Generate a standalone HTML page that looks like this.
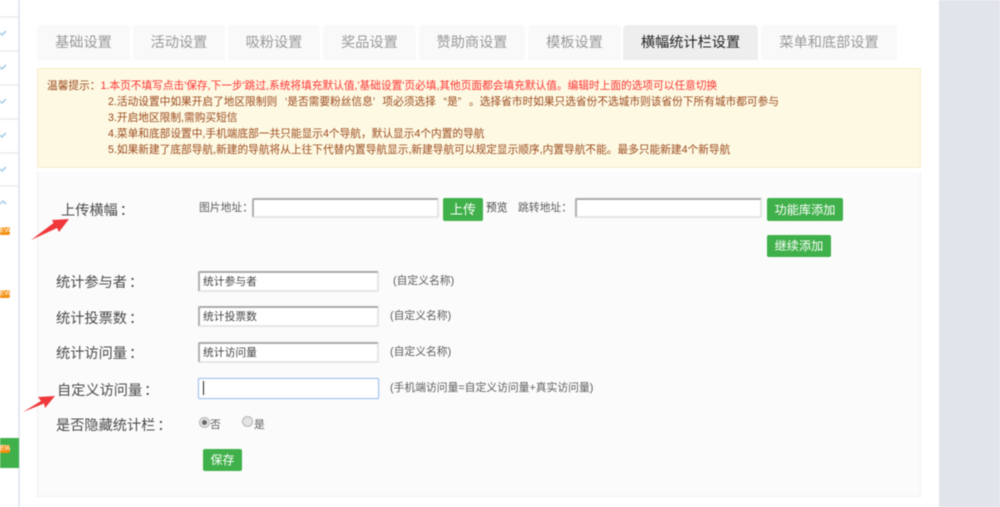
<!DOCTYPE html>
<html lang="zh">
<head>
<meta charset="utf-8">
<style>
html,body{margin:0;padding:0;background:#fff}
#p{position:relative;width:1000px;height:507px;overflow:hidden;background:#fff;font-family:"Liberation Sans","Noto Sans CJK SC",sans-serif;filter:blur(.45px)}
#p div{position:absolute;white-space:nowrap;box-sizing:border-box}
.tab{top:25px;height:35px;background:#f9f9f9;border-radius:4px 4px 0 0;color:#999;font-size:14.2px;line-height:36px;text-align:center}
.n{left:0;width:18px;height:2px;background:#f0f0f0}
.b{left:0;width:10px;height:8px;background:#f39012;border-radius:0 2px 2px 0;color:#fff;font-size:7px;line-height:8px;text-align:right;overflow:hidden}
.l{color:#4a4a4a;font-size:14.2px;line-height:20px}
.l .c{margin-left:2px}
.s{color:#5c5c5c;font-size:10.8px;line-height:14px}
.i{background:#fff;border:1px solid #e6e6e6;border-bottom:2px solid #e6e6e6;border-right:2px solid #e6e6e6;border-top:2px solid #aaa;border-left:2px solid #b0b0b0;border-radius:2px;font-size:10.8px;line-height:18px;color:#444;padding-left:3px}
.g{background:#40b04a;border-radius:2px;color:#fff;text-align:center}
.t{left:47px;font-size:10.7px;line-height:16px;color:#9c4a1e}
.c{font-family:"Liberation Sans","Noto Sans CJK TC",sans-serif}
</style>
</head>
<body>
<div id="p">
<div style="left:18px;top:0;width:2px;height:507px;background:#e3e8f0"></div>
<div class="n" style="top:16px"></div>
<div class="n" style="top:50px"></div>
<div class="n" style="top:84px"></div>
<div class="n" style="top:118px"></div>
<div class="n" style="top:152px"></div>
<div class="n" style="top:185px"></div>
<svg style="position:absolute;left:0;top:0" width="18" height="210" fill="none" stroke="#a9cfe8" stroke-width="1.6">
<path d="M0 33l2 2 4-4M0 67l2 2 4-4M0 101l2 2 4-4M0 135l2 2 4-4M0 169l2 2 4-4M0 204l3-3 3 3"/>
</svg>
<div class="b" style="top:227px">EW</div>
<div class="b" style="top:290px">EW</div>
<div style="left:0;top:438px;width:19px;height:30px;background:#40b04a"></div>
<div class="b" style="top:445px">EW</div>

<div class="tab" style="left:37px;width:93px">基础设置</div>
<div class="tab" style="left:133px;width:92px">活动设置</div>
<div class="tab" style="left:228px;width:92px">吸粉设置</div>
<div class="tab" style="left:323px;width:93px">奖品设置</div>
<div class="tab" style="left:419px;width:106px">赞助商设置</div>
<div class="tab" style="left:528px;width:93px">模板设置</div>
<div class="tab" style="left:623px;width:135px;background:#eee;color:#222">横幅统计栏设置</div>
<div class="tab" style="left:761px;width:136px">菜单和底部设置</div>

<div style="left:37px;top:68px;width:884px;height:100px;background:#fdf9e3;border:1px solid #f8eecb"></div>
<div class="t" style="top:78px">温馨提示<span class="c">：</span><span style="color:#f33">1.本页不填写点击'保存,下一步'跳过,系统将填充默认值,'基础设置'页必填,其他页面都会填充默认值。编辑时上面的选项可以任意切换</span></div>
<div class="t" style="left:108px;top:94px;word-spacing:4.7px">2.活动设置中如果开启了地区限制则 ‘是否需要粉丝信息’ 项必须选择 “是” 。选择省市时如果只选省份不选城市则该省份下所有城市都可参与</div>
<div class="t" style="left:108px;top:110px">3.开启地区限制,需购买短信</div>
<div class="t" style="left:108px;top:126px">4.菜单和底部设置中,手机端底部一共只能显示4个导航，默认显示4个内置的导航</div>
<div class="t" style="left:108px;top:142px">5.如果新建了底部导航,新建的导航将从上往下代替内置导航显示,新建导航可以规定显示顺序,内置导航不能。最多只能新建4个新导航</div>

<div style="left:37px;top:172px;width:884px;height:325px;background:#fbfbfb;border:1px solid #f0f0f0;border-top:0"></div>

<div style="left:939px;top:0;width:61px;height:507px;background:#e2e4eb"></div>

<div class="l" style="left:61px;top:201px">上传横幅<span class="c">：</span></div>
<div class="s" style="left:199px;top:201px">图片地址<span class="c">：</span></div>
<div class="i" style="left:252px;top:198px;width:187px;height:20px"></div>
<div class="g" style="left:443px;top:198px;width:40px;height:23px;font-size:13px;line-height:24px">上传</div>
<div class="s" style="left:486px;top:201px;color:#444">预览</div>
<div class="s" style="left:518px;top:201px">跳转地址<span class="c">：</span></div>
<div class="i" style="left:575px;top:198px;width:187px;height:20px"></div>
<div class="g" style="left:767px;top:198px;width:76px;height:23px;font-size:12.2px;line-height:24px">功能库添加</div>
<div class="g" style="left:767px;top:235px;width:64px;height:22px;font-size:12.2px;line-height:23px">继续添加</div>

<div class="l" style="left:56px;top:273px">统计参与者<span class="c">：</span></div>
<div class="i" style="left:198px;top:271px;width:181px;height:21px">统计参与者</div>
<div class="s" style="left:393px;top:274px">(自定义名称)</div>

<div class="l" style="left:56px;top:309px">统计投票数<span class="c">：</span></div>
<div class="i" style="left:198px;top:306px;width:181px;height:21px">统计投票数</div>
<div class="s" style="left:390px;top:309px">(自定义名称)</div>

<div class="l" style="left:56px;top:344px">统计访问量<span class="c">：</span></div>
<div class="i" style="left:198px;top:342px;width:181px;height:21px">统计访问量</div>
<div class="s" style="left:390px;top:345px">(自定义名称)</div>

<div class="l" style="left:57px;top:381px">自定义访问量<span class="c">：</span></div>
<div style="left:198px;top:378px;width:181px;height:21px;background:#fff;border:1px solid #9fc2ee;box-shadow:0 0 1px #9fc2ee;border-radius:2px"></div>
<div style="left:203px;top:381px;width:1px;height:14px;background:#222"></div>
<div class="s" style="left:390px;top:381px">(手机端访问量=自定义访问量+真实访问量)</div>

<div class="l" style="left:56px;top:416px">是否隐藏统计栏<span class="c">：</span></div>
<div style="left:199px;top:417px;width:11px;height:11px;border-radius:50%;background:#e4e4e4;border:1px solid #b5b5b5"></div>
<div style="left:202px;top:420px;width:5px;height:5px;border-radius:50%;background:#666"></div>
<div class="s" style="left:210px;top:418px">否</div>
<div style="left:242px;top:416px;width:11px;height:11px;border-radius:50%;background:#e4e4e4;border:1px solid #b5b5b5"></div>
<div class="s" style="left:254px;top:418px">是</div>

<div class="g" style="left:203px;top:449px;width:39px;height:22px;font-size:12px;line-height:23px">保存</div>

<svg style="position:absolute;left:0;top:0" width="100" height="507">
<path d="M31 240L53.500 223 52 220 69 219 59 232 57 228Z" fill="#f0383a"/>
<path d="M23 412L41 401 38 397 55 396 45 408 44 403.500Z" fill="#f0383a"/>
</svg>
</div>
</body>
</html>
